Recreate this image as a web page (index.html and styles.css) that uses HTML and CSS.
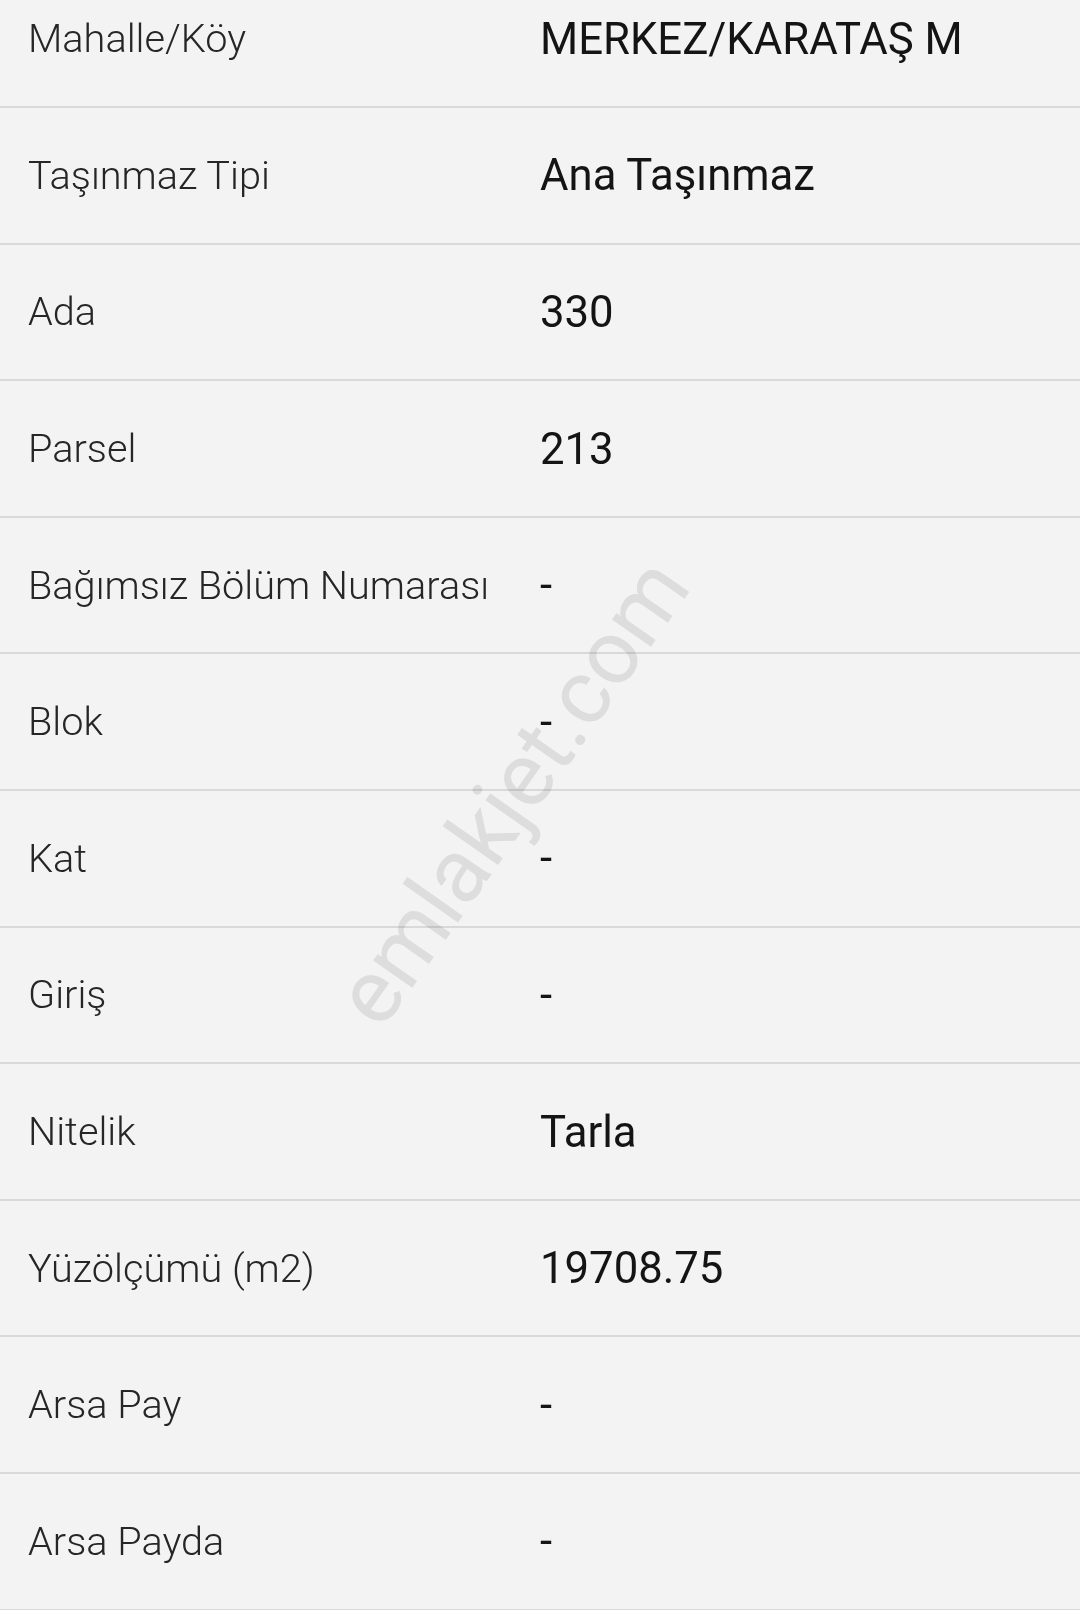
FILE: index.html
```html
<!DOCTYPE html>
<html lang="tr">
<head>
<meta charset="utf-8">
<title>Taşınmaz Bilgileri</title>
<link rel="stylesheet" href="styles.css">
</head>
<body>
<div class="page">
  <dl class="list">
    <div class="row"><dt class="label">Mahalle/Köy</dt><dd class="value">MERKEZ/KARATAŞ M</dd></div>
    <div class="row"><dt class="label">Taşınmaz Tipi</dt><dd class="value">Ana Taşınmaz</dd></div>
    <div class="row"><dt class="label">Ada</dt><dd class="value">330</dd></div>
    <div class="row"><dt class="label">Parsel</dt><dd class="value">213</dd></div>
    <div class="row"><dt class="label">Bağımsız Bölüm Numarası</dt><dd class="value dash">-</dd></div>
    <div class="row"><dt class="label">Blok</dt><dd class="value dash">-</dd></div>
    <div class="row"><dt class="label">Kat</dt><dd class="value dash">-</dd></div>
    <div class="row"><dt class="label">Giriş</dt><dd class="value dash">-</dd></div>
    <div class="row"><dt class="label">Nitelik</dt><dd class="value">Tarla</dd></div>
    <div class="row"><dt class="label">Yüzölçümü (m2)</dt><dd class="value">19708.75</dd></div>
    <div class="row"><dt class="label">Arsa Pay</dt><dd class="value dash">-</dd></div>
    <div class="row"><dt class="label">Arsa Payda</dt><dd class="value dash">-</dd></div>
  </dl>
  <div class="watermark">emlakjet.com</div>
</div>
</body>
</html>
```

FILE: styles.css
```css
html, body {
  margin: 0;
  padding: 0;
  background: #f3f3f3;
}
body {
  font-family: Roboto, "Noto Sans", "Liberation Sans", sans-serif;
  width: 1080px;
  height: 1610px;
  overflow: hidden;
}
.page {
  position: relative;
  width: 1080px;
  height: 1610px;
  overflow: hidden;
}
.list {
  margin: -28.5px 0 0 0;
  padding: 0;
}
.row {
  display: grid;
  grid-template-columns: 512px 1fr;
  align-items: center;
  height: 136.6px;
  box-sizing: border-box;
  padding: 0 0 0 28px;
  border-bottom: 2px solid #d9d9d9;
}
.label {
  margin: 0;
  font-size: 39.7px;
  font-weight: 300;
  color: #262626;
  white-space: nowrap;
}
.value {
  margin: 0;
  font-size: 43.7px;
  font-weight: 400;
  color: #141414;
  white-space: nowrap;
}
.watermark {
  position: absolute;
  left: 512px;
  top: 792px;
  transform: translate(-50%, -50%) rotate(-55deg);
  font-size: 90px;
  font-weight: 400;
  color: #e8e8e8;
  white-space: nowrap;
  pointer-events: none;
  mix-blend-mode: multiply;
}
```
